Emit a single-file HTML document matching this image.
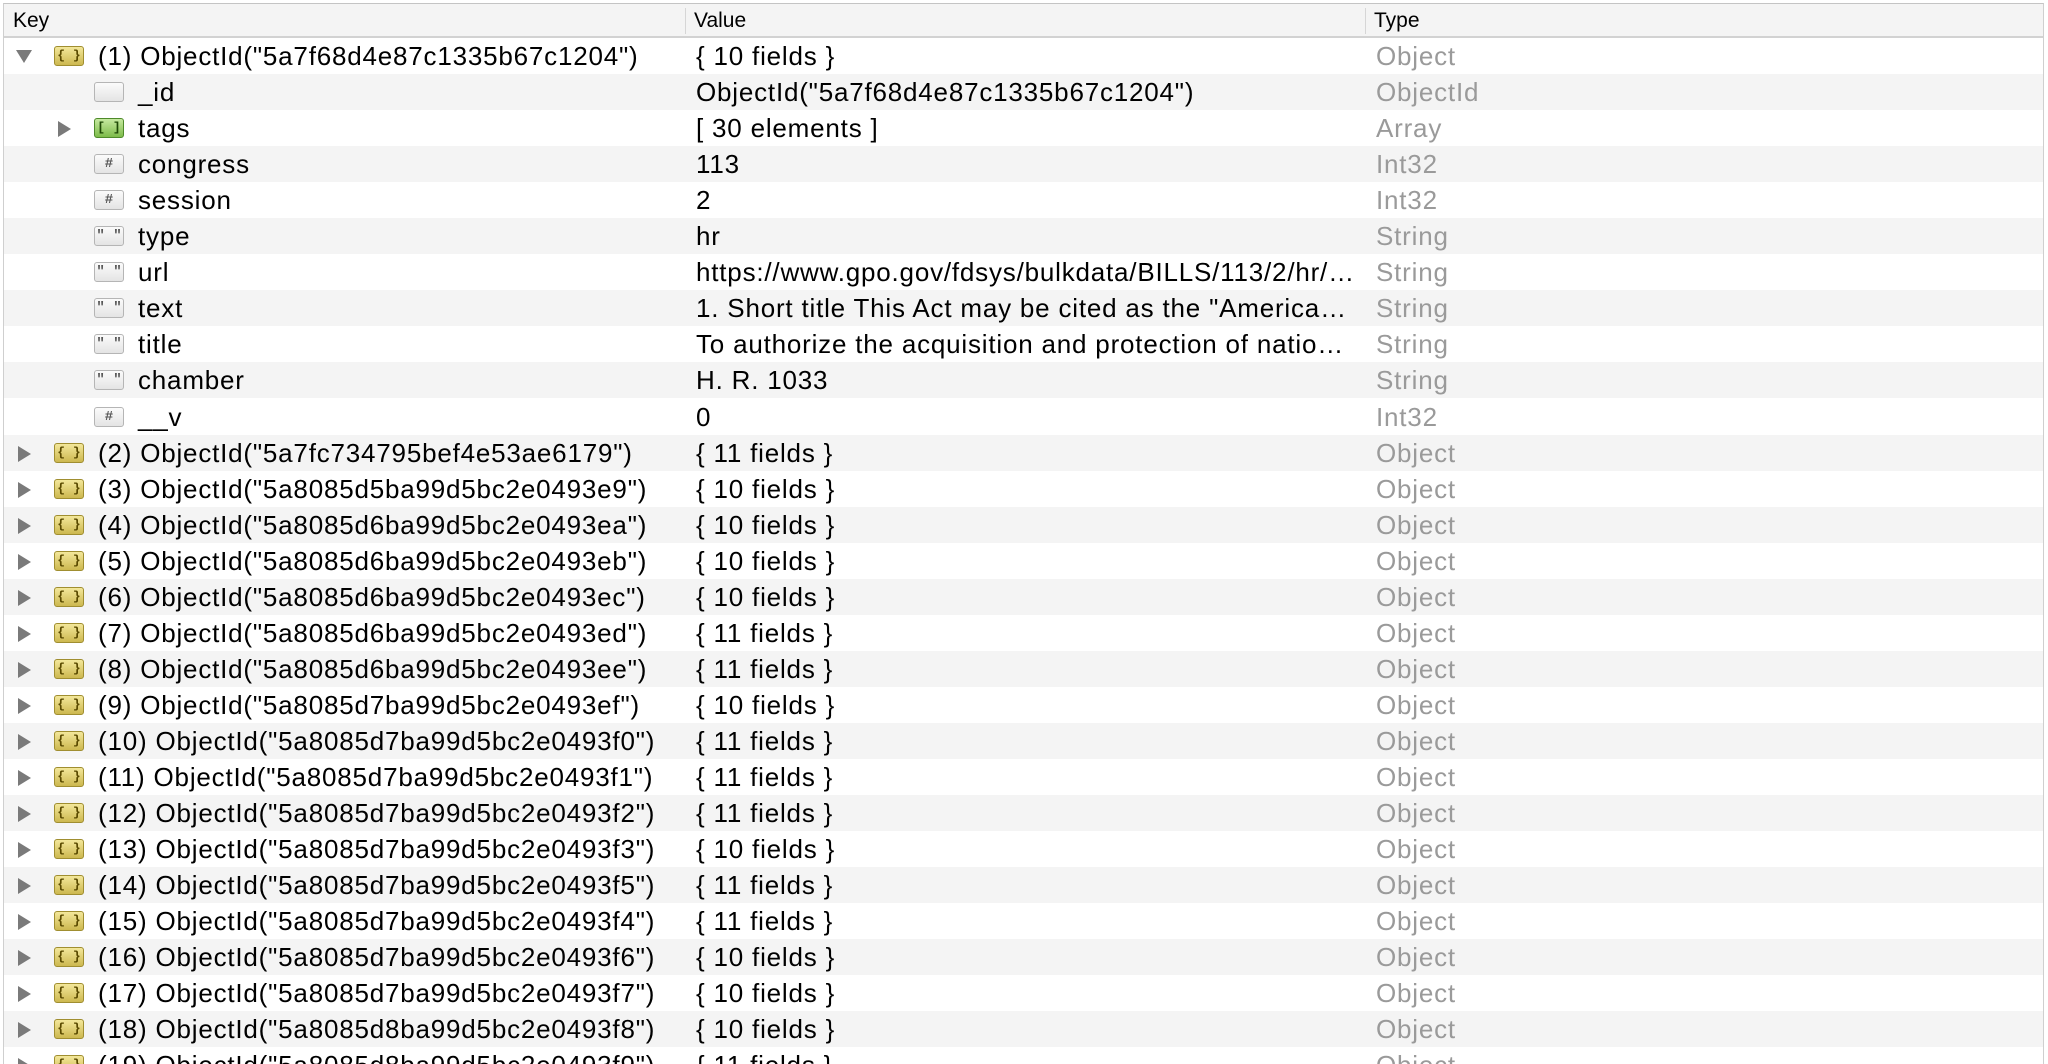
<!DOCTYPE html>
<html><head><meta charset="utf-8"><style>
*{margin:0;padding:0;box-sizing:border-box}
body{width:2048px;height:1064px;overflow:hidden;background:#fff;font-family:"Liberation Sans",Arial,sans-serif;color:#000}
.wrap{position:absolute;left:3px;top:3px;width:2041px;height:1061px;border-left:1px solid #cfcfcf;border-top:1px solid #c4c4c4;border-right:1px solid #cfcfcf;overflow:hidden}
.hdr{position:absolute;left:0;top:0;width:100%;height:34px;background:#f4f4f4;border-bottom:2px solid #d2d2d2;font-size:21px}
.hdr span{position:absolute;top:5px}
.sep{position:absolute;top:4px;width:1px;height:26px;background:#d6d6d6}
.row{position:absolute;left:0;width:100%;height:36px;font-size:26px;letter-spacing:0.8px;line-height:36px;white-space:nowrap}
.row.g{background:#f4f4f4}
.k,.v,.t{position:absolute;top:0}
.v{left:692px;width:660px;overflow:hidden;text-overflow:ellipsis}
.t{left:1372px;color:#9a9a9a}
.tri{position:absolute;top:11px;width:0;height:0}
.tr{border-left:13px solid #7a7a7a;border-top:8px solid transparent;border-bottom:8px solid transparent}
.td{border-top:13px solid #7a7a7a;border-left:8px solid transparent;border-right:8px solid transparent;top:12px}
.ic{position:absolute;top:8px;width:30px;height:20px;border-radius:3px;font-size:13px;line-height:18px;text-align:center;letter-spacing:0;font-family:"Liberation Mono",monospace;font-weight:bold}
.obj{background:linear-gradient(#f3e79a,#cdb850);border:1px solid #a08e30;color:#5a4a00}
.arr{background:linear-gradient(#c6e9a0,#7dbb4a);border:1px solid #4e8a2a;color:#1f4a06}
.oid{background:linear-gradient(#fbfbfb,#e4e4e4);border:1px solid #b5b5b5}
.num,.str{background:linear-gradient(#fbfbfb,#e4e4e4);border:1px solid #b5b5b5;color:#555;font-size:14px}
</style></head><body><div class="wrap">
<div class="hdr"><span style="left:9px">Key</span><div class="sep" style="left:681px"></div><span style="left:690px">Value</span><div class="sep" style="left:1361px"></div><span style="left:1370px">Type</span></div>
<div id="rows"></div>
</div>
<script>
var rows=[
[0,'d','obj','(1) ObjectId("5a7f68d4e87c1335b67c1204")','{ 10 fields }','Object'],
[1,'','oid','_id','ObjectId("5a7f68d4e87c1335b67c1204")','ObjectId'],
[1,'r','arr','tags','[ 30 elements ]','Array'],
[1,'','num','congress','113','Int32'],
[1,'','num','session','2','Int32'],
[1,'','str','type','hr','String'],
[1,'','str','url','https://www.gpo.gov/fdsys/bulkdata/BILLS/113/2/hr/BILLS-113hr1033ih.xml','String'],
[1,'','str','text','1. Short title This Act may be cited as the "American Battlefield Protection','String'],
[1,'','str','title','To authorize the acquisition and protection of nationally significant','String'],
[1,'','str','chamber','H. R. 1033','String'],
[1,'','num','__v','0','Int32']];
var ids=[['5a7fc734795bef4e53ae6179',11],['5a8085d5ba99d5bc2e0493e9',10],['5a8085d6ba99d5bc2e0493ea',10],['5a8085d6ba99d5bc2e0493eb',10],['5a8085d6ba99d5bc2e0493ec',10],['5a8085d6ba99d5bc2e0493ed',11],['5a8085d6ba99d5bc2e0493ee',11],['5a8085d7ba99d5bc2e0493ef',10],['5a8085d7ba99d5bc2e0493f0',11],['5a8085d7ba99d5bc2e0493f1',11],['5a8085d7ba99d5bc2e0493f2',11],['5a8085d7ba99d5bc2e0493f3',10],['5a8085d7ba99d5bc2e0493f5',11],['5a8085d7ba99d5bc2e0493f4',11],['5a8085d7ba99d5bc2e0493f6',10],['5a8085d7ba99d5bc2e0493f7',10],['5a8085d8ba99d5bc2e0493f8',10],['5a8085d8ba99d5bc2e0493f9',11]];
ids.forEach(function(a,i){rows.push([0,'r','obj','('+(i+2)+') ObjectId("'+a[0]+'")','{ '+a[1]+' fields }','Object'])});
var glyph={obj:'{ }',arr:'[ ]',oid:'',num:'#',str:'" "'};
var h='';
rows.forEach(function(r,i){
var y=34+i*36.05,lv=r[0],off=lv*40;
h+='<div class="row'+(i%2?' g':'')+'" style="top:'+y+'px">';
if(r[1]=='d')h+='<div class="tri td" style="left:'+(12+off)+'px"></div>';
if(r[1]=='r')h+='<div class="tri tr" style="left:'+(14+off)+'px"></div>';
h+='<div class="ic '+r[2]+'" style="left:'+(50+off)+'px">'+glyph[r[2]]+'</div>';
h+='<div class="k" style="left:'+(94+off)+'px">'+r[3].replace(/</g,'&lt;')+'</div>';
h+='<div class="v">'+r[4]+'</div><div class="t">'+r[5]+'</div></div>';
});
document.getElementById('rows').innerHTML=h;
</script>
</body></html>
